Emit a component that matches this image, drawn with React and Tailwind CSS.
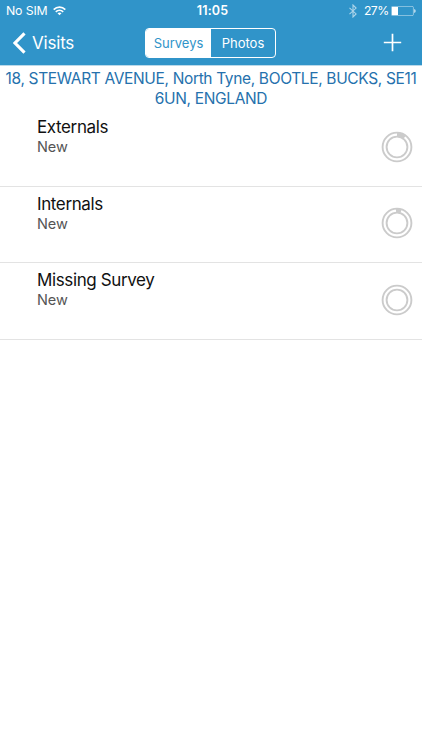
import React from "react";

const surveys = [
  { name: "Externals", status: "New", arc: "M397.3 134.6a12.4 12.4 0 0 1 7.6 2.6", height: "h-[77px]", pad: "pt-[7px]", ring: "mt-[20px]" },
  { name: "Internals", status: "New", arc: "M396.3 134.6a12.4 12.4 0 0 1 5 .6", height: "h-[76px]", pad: "pt-[6.5px]", ring: "mt-[19px]" },
  { name: "Missing Survey", status: "New", arc: null, height: "h-[77px]", pad: "pt-[7px]", ring: "mt-[19.5px]" },
];

function ProgressRing({ arc, offset }) {
  return (
    <svg className={`mr-[7.7px] h-[34px] w-[34px] shrink-0 ${offset}`} viewBox="380.3 130 34 34" fill="none" stroke="#cbcbcb">
      <circle cx="397.3" cy="147" r="14.4" strokeWidth="1.9" />
      <circle cx="397.3" cy="147" r="10.4" strokeWidth="1.9" />
      {arc && <path d={arc} strokeWidth="3.8" />}
    </svg>
  );
}

function StatusBar() {
  return (
    <div className="grid h-[21px] grid-cols-3 items-center text-[12.5px] leading-[20px]">
      <div className="flex items-center pl-[6px]">
        <span className="w-[42px] whitespace-nowrap text-[12.3px] tracking-[-0.15px]">No SIM</span>
        <svg className="ml-[5px] h-[10px] w-[13px]" viewBox="0 0 13 10" fill="none" stroke="white" strokeWidth="1.7">
          <path d="M.7 3.6C4 .4 9 .4 12.3 3.6M2.8 5.8c2.1-2 5.3-2 7.4 0" />
          <path d="M4.5 7.2c1.2-1 2.8-1 4 0l-2 2.1z" fill="white" stroke="none" />
        </svg>
      </div>
      <span className="pl-[3px] text-center font-semibold tracking-[0.2px]">11:05</span>
      <div className="flex items-center justify-end pr-[6px]">
        <svg className="mr-[7px] h-[14px] w-[8px] opacity-60" viewBox="0 0 8 14" fill="none" stroke="white" strokeWidth="1.1">
          <path d="M.5 3.8l6.6 6.1L4 13V1l3.1 3.1-6.6 6.1" />
        </svg>
        <span className="w-[25px] whitespace-nowrap text-[12.2px] tracking-[-0.6px]">27%</span>
        <svg className="ml-[2px] h-[10px] w-[25px]" viewBox="0 0 25 10" fill="none">
          <rect x=".4" y=".4" width="22" height="9.2" rx="1.2" stroke="white" strokeOpacity=".65" strokeWidth=".7" />
          <path d="M1 1h6v8H1z" fill="white" />
          <path d="M23.4 3c1.5.7 1.5 3.3 0 4z" fill="white" />
        </svg>
      </div>
    </div>
  );
}

function NavBar() {
  return (
    <div className="grid h-[44px] grid-cols-3 items-center">
      <button className="flex items-center pl-[13px]">
        <svg className="h-[22px] w-[13px]" viewBox="0 0 13 22" fill="none" stroke="white" strokeWidth="3.1">
          <path d="M11.5 1.3L2 11l9.5 9.7" />
        </svg>
        <span className="ml-[6px] text-[17px] leading-[22px] tracking-[-0.2px]">Visits</span>
      </button>
      <div className="-ml-px -mt-px flex h-[30px] w-[131px] justify-self-center overflow-hidden rounded-[4px] border border-white text-[13px] leading-[28px]">
        <button className="w-[65px] bg-white text-center text-[#3094c9]">Surveys</button>
        <button className="w-[64px] text-center">Photos</button>
      </div>
      <svg className="mr-[20px] -mt-[2px] h-[19px] w-[19px] justify-self-end" viewBox="0 0 19 19" stroke="white" strokeWidth="1.7">
        <path d="M.8 9.5h17.4M9.5.8v17.4" />
      </svg>
    </div>
  );
}

export default function App() {
  return (
    <main className="min-h-[750px] w-full bg-white font-['Inter','Liberation_Sans',sans-serif]">
      <header className="bg-[#3094c9] text-white">
        <StatusBar />
        <NavBar />
      </header>
      <div className="h-px bg-[#b9d9ea]" />
      <h1 className="h-[44px] pt-[3px] text-center text-[15.5px] font-normal leading-[20px] text-[#2571ad]">
        <span className="block whitespace-nowrap tracking-[-0.35px]">18, STEWART AVENUE, North Tyne, BOOTLE, BUCKS, SE11</span>
        <span className="block tracking-[-0.35px]">6UN, ENGLAND</span>
      </h1>
      <ul>
        {surveys.map((s) => (
          <li key={s.name} className={`flex justify-between border-b border-[#e3e3e3] pl-[37px] ${s.height}`}>
            <div className={s.pad}>
              <div className="text-[17px] leading-[20px] tracking-[-0.38px] text-[#111]">{s.name}</div>
              <div className="text-[14.5px] leading-[19.5px] tracking-[-0.05px] text-[#555]">{s.status}</div>
            </div>
            <ProgressRing arc={s.arc} offset={s.ring} />
          </li>
        ))}
      </ul>
    </main>
  );
}
